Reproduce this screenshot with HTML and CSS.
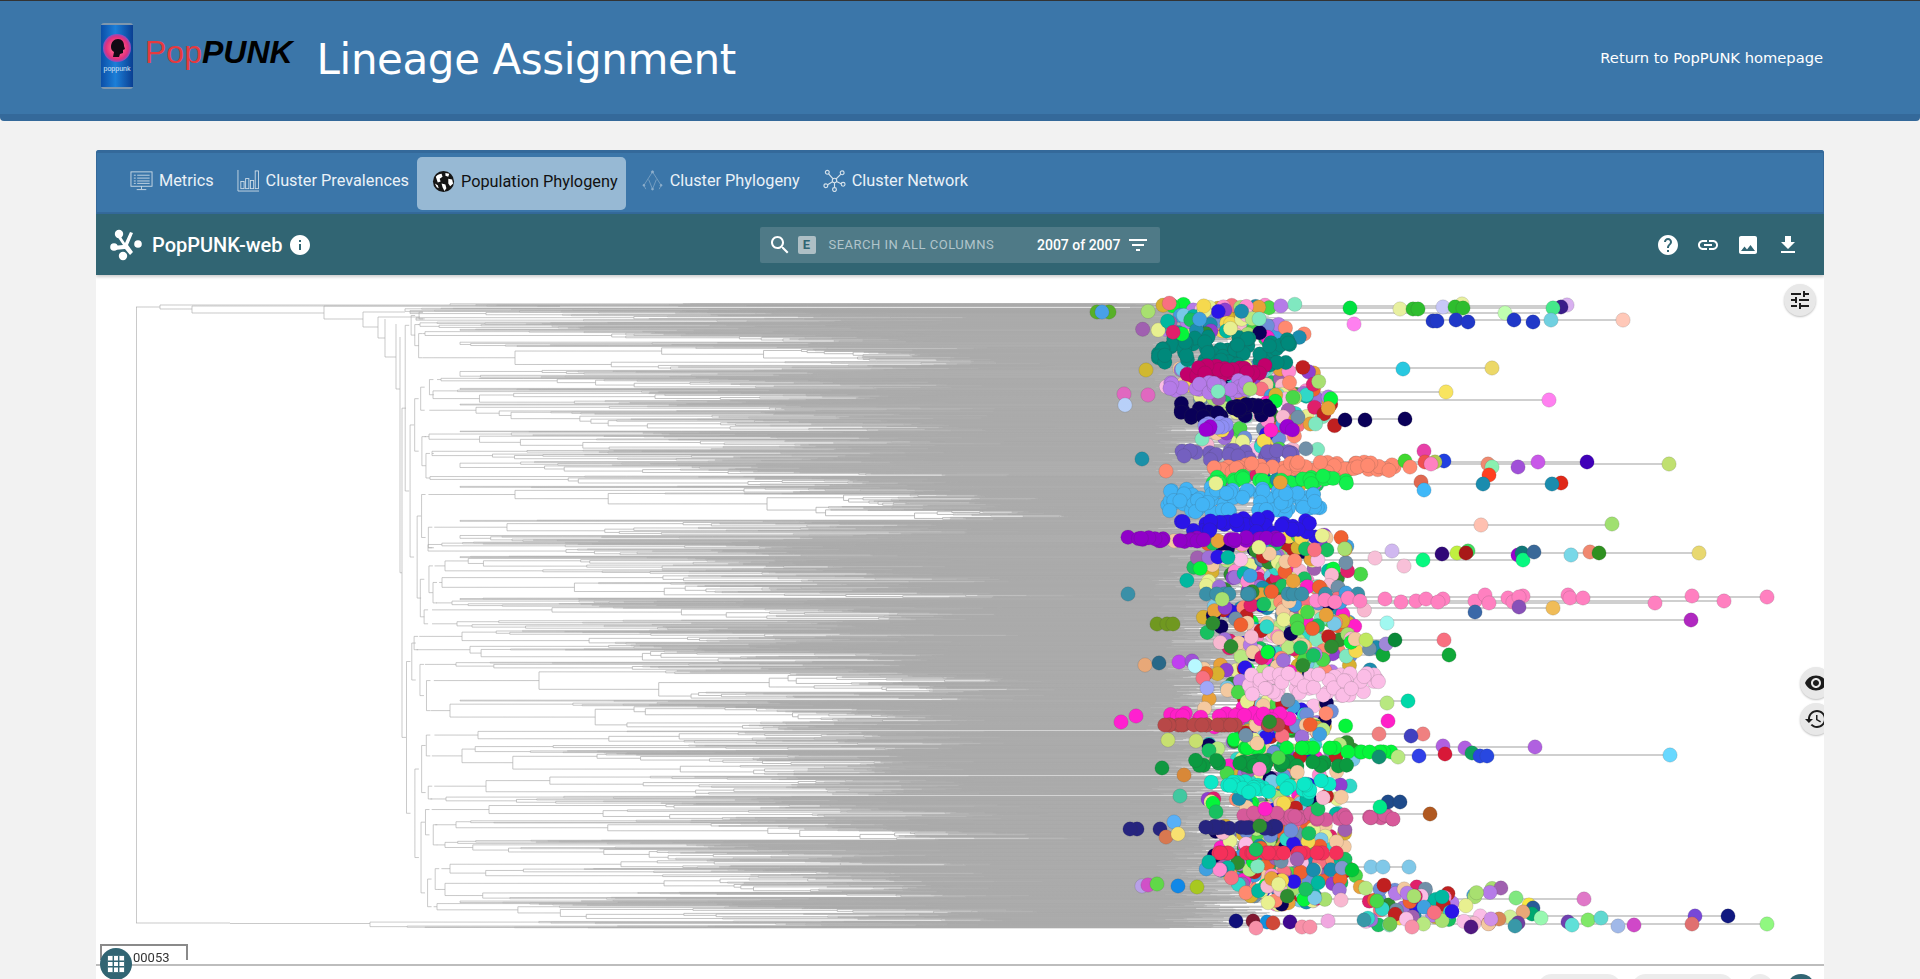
FILE: index.html

```html
<!DOCTYPE html>
<html lang="en">
<head>
  <meta charset="UTF-8">
  <title>PopPUNK - Lineage Assignment</title>
  <link rel="stylesheet" href="styles.css">
</head>
<body>
  <header class="topbar">
    <div class="brand">
      <svg class="can" width="34" height="66" viewBox="0 0 34 66">
        <defs>
          <linearGradient id="canBlue" x1="0" x2="1" y1="0" y2="0">
            <stop offset="0" stop-color="#0b4fa8"/>
            <stop offset="0.45" stop-color="#1c7fd8"/>
            <stop offset="1" stop-color="#0a3f92"/>
          </linearGradient>
          <radialGradient id="canSun">
            <stop offset="0.35" stop-color="#ff5a8a"/>
            <stop offset="0.8" stop-color="#e0307e"/>
            <stop offset="1" stop-color="#8a4fc0"/>
          </radialGradient>
        </defs>
        <rect x="1" y="0" width="32" height="66" rx="3" fill="#7f97ad"/>
        <rect x="1" y="2" width="32" height="62" fill="url(#canBlue)"/>
        <circle cx="17" cy="25" r="14" fill="url(#canSun)"/>
        <path d="M11 24c0-5 3-8 7-8s6 3 6 7l1 3-2 1v3l-3 1-1 3h-6l1-5c-2-1-3-3-3-5z" fill="#120a14"/>
        <text x="17" y="48" class="can-label">poppunk</text>
      </svg>
      <div class="wordmark"><span class="pop">Pop</span><span class="punk">PUNK</span></div>
    </div>
    <h1 class="title">Lineage Assignment</h1>
    <a class="home-link" href="#">Return to PopPUNK homepage</a>
  </header>

  <main class="page">
    <section class="card">
      <nav class="tabs">
        <a class="tab" href="#">
          <svg class="tab-icon" viewBox="0 0 24 24" fill="none" stroke="currentColor" stroke-width="0.9">
            <rect x="1" y="3" width="22" height="15"/><path d="M4 6.5h2M7.5 6.5h13M4 9.5h2M7.5 9.5h13M4 12.5h2M7.5 12.5h13M4 15h2M7.5 15h13M12 18v3M7 21.5h10"/>
          </svg>
          Metrics
        </a>
        <a class="tab" href="#">
          <svg class="tab-icon" viewBox="0 0 24 24" fill="none" stroke="currentColor" stroke-width="0.9">
            <path d="M1 1v22h22"/><rect x="4" y="13" width="3.4" height="7.5"/><rect x="9" y="10" width="3.4" height="10.5"/><rect x="14" y="12" width="3.4" height="8.5"/><rect x="19" y="2" width="3.4" height="18.5"/>
          </svg>
          Cluster Prevalences
        </a>
        <a class="tab tab-active" href="#">
          <svg class="tab-icon" viewBox="0 0 24 24">
            <circle cx="12" cy="12" r="11" fill="#161616"/>
            <path d="M4 7c2-2 4-3 6-3l1 3-3 2 1 3-3 1zM14 3l4 1-1 3-3-1zM17 9l4 1 1 4-3 3-2-3zM10 14l4 1 1 4-2 3-2-4zM3 14l3 2 1 3-2-1z" fill="#fff"/>
          </svg>
          Population Phylogeny
        </a>
        <a class="tab" href="#">
          <svg class="tab-icon tab-icon-faint" viewBox="0 0 24 24" fill="none" stroke="currentColor" stroke-width="0.7">
            <path d="M12 3L3 17M12 3l9 14M8 11l4 10M16 11l-4 10M3 17l2 4M21 17l-2 4"/>
            <circle cx="12" cy="3" r="1.2" fill="currentColor"/><circle cx="3" cy="17" r="1" fill="currentColor"/><circle cx="21" cy="17" r="1" fill="currentColor"/><circle cx="12" cy="21" r="1" fill="currentColor"/>
          </svg>
          Cluster Phylogeny
        </a>
        <a class="tab" href="#">
          <svg class="tab-icon" viewBox="0 0 24 24" fill="none" stroke="currentColor" stroke-width="1.2">
            <path d="M12 12L5 4M12 12l8-8M12 12l-8 5M12 12l8 4M12 12v9"/>
            <circle cx="12" cy="12" r="2.3" fill="#3b76a9"/><circle cx="4.5" cy="3.5" r="2" fill="#3b76a9"/><circle cx="20" cy="4" r="2" fill="#3b76a9"/><circle cx="3" cy="17.5" r="2" fill="#3b76a9"/><circle cx="21" cy="16" r="2" fill="#3b76a9"/><circle cx="12" cy="21.5" r="2" fill="#3b76a9"/>
          </svg>
          Cluster Network
        </a>
      </nav>

      <div class="toolbar">
        <div class="project">
          <svg class="project-logo" viewBox="0 0 32 32" fill="#fff">
            <circle cx="9" cy="5" r="4.2"/><circle cx="28" cy="15" r="3.8"/><circle cx="4" cy="18" r="3.8"/><circle cx="13" cy="27" r="4.2"/>
            <path d="M9 5l6 9 5-11 3 1-5 12 5 7-3 3-5-6-11 1-1-4 10-1-6-9z"/>
          </svg>
          <span class="project-name">PopPUNK-web</span>
          <svg class="icon icon-info" viewBox="0 0 24 24"><path d="M12 2C6.48 2 2 6.48 2 12s4.48 10 10 10 10-4.48 10-10S17.52 2 12 2zm1 15h-2v-6h2v6zm0-8h-2V7h2v2z"/></svg>
        </div>
        <div class="search">
          <svg class="icon" viewBox="0 0 24 24"><path d="M15.5 14h-.79l-.28-.27C15.41 12.59 16 11.11 16 9.5 16 5.91 13.09 3 9.5 3S3 5.91 3 9.5 5.91 16 9.5 16c1.61 0 3.09-.59 4.23-1.57l.27.28v.79l5 4.99L20.49 19l-4.99-5zm-6 0C7.01 14 5 11.99 5 9.5S7.01 5 9.5 5 14 7.01 14 9.5 11.99 14 9.5 14z"/></svg>
          <span class="search-key">E</span>
          <span class="search-hint">SEARCH IN ALL COLUMNS</span>
          <span class="search-count">2007 of 2007</span>
          <svg class="icon" viewBox="0 0 24 24"><path d="M10 18h4v-2h-4v2zM3 6v2h18V6H3zm3 7h12v-2H6v2z"/></svg>
        </div>
        <div class="actions">
          <svg class="icon" viewBox="0 0 24 24"><path d="M12 2C6.48 2 2 6.48 2 12s4.48 10 10 10 10-4.48 10-10S17.52 2 12 2zm1 17h-2v-2h2v2zm2.07-7.75l-.9.92C13.45 12.9 13 13.5 13 15h-2v-.5c0-1.1.45-2.1 1.17-2.83l1.24-1.26c.37-.36.59-.86.59-1.41 0-1.1-.9-2-2-2s-2 .9-2 2H8c0-2.21 1.79-4 4-4s4 1.79 4 4c0 .88-.36 1.68-.93 2.25z"/></svg>
          <svg class="icon" viewBox="0 0 24 24"><path d="M3.9 12c0-1.71 1.39-3.1 3.1-3.1h4V7H7c-2.76 0-5 2.24-5 5s2.24 5 5 5h4v-1.9H7c-1.71 0-3.1-1.39-3.1-3.1zM8 13h8v-2H8v2zm9-6h-4v1.9h4c1.71 0 3.1 1.39 3.1 3.1s-1.39 3.1-3.1 3.1h-4V17h4c2.76 0 5-2.24 5-5s-2.24-5-5-5z"/></svg>
          <svg class="icon" viewBox="0 0 24 24"><path d="M21 19V5c0-1.1-.9-2-2-2H5c-1.1 0-2 .9-2 2v14c0 1.1.9 2 2 2h14c1.1 0 2-.9 2-2zM8.5 13.5l2.5 3.01L14.5 12l4.5 6H5l3.5-4.5z"/></svg>
          <svg class="icon" viewBox="0 0 24 24"><path d="M19 9h-4V3H9v6H5l7 7 7-7zM5 18v2h14v-2H5z"/></svg>
        </div>
      </div>

      <div class="stage">
        <canvas id="tree" width="1728" height="689"></canvas>
        <button class="round round-tune"><svg viewBox="0 0 24 24"><path d="M3 17v2h6v-2H3zM3 5v2h10V5H3zm10 16v-2h8v-2h-8v-2h-2v6h2zM7 9v2H3v2h4v2h2V9H7zm14 4v-2H11v2h10zm-6-4h2V7h4V5h-4V3h-2v6z"/></svg></button>
        <button class="round round-eye"><svg viewBox="0 0 24 24"><path d="M12 4.5C7 4.5 2.73 7.61 1 12c1.73 4.39 6 7.5 11 7.5s9.27-3.11 11-7.5c-1.73-4.39-6-7.5-11-7.5zM12 17c-2.76 0-5-2.24-5-5s2.24-5 5-5 5 2.24 5 5-2.24 5-5 5zm0-8c-1.66 0-3 1.34-3 3s1.34 3 3 3 3-1.34 3-3-1.34-3-3-3z"/></svg></button>
        <button class="round round-history"><svg viewBox="0 0 24 24"><path d="M13 3c-4.97 0-9 4.03-9 9H1l3.89 3.89.07.14L9 12H6c0-3.87 3.13-7 7-7s7 3.13 7 7-3.13 7-7 7c-1.93 0-3.68-.79-4.94-2.06l-1.42 1.42C8.27 19.99 10.51 21 13 21c4.97 0 9-4.03 9-9s-4.03-9-9-9zm-1 5v5l4.28 2.54.72-1.21-3.5-2.08V8H12z"/></svg></button>
      </div>

      <div class="slicer">00053</div>
      <div class="grid-button">
        <svg viewBox="0 0 20 20"><path d="M1 1h18v18H1z" fill="#fff"/><path d="M7 1v18M13 1v18M1 7h18M1 13h18" stroke="#316573" stroke-width="1.6"/></svg>
      </div>

      <div class="footer">
        <span class="pill pill-a"></span>
        <span class="pill pill-b"></span>
        <span class="pill pill-c"></span>
        <span class="pill pill-d"></span>
      </div>
    </section>
  </main>
  <script src="tree.js"></script>
</body>
</html>
```

FILE: styles.css

```css
* {
  box-sizing: border-box;
}
html, body {
  margin: 0;
  height: 979px;
  overflow: hidden;
}
body {
  background: #f2f2f2;
  font-family: Roboto, "Liberation Sans", sans-serif;
}

/* header */
.topbar {
  display: flex;
  align-items: center;
  height: 121px;
  padding: 0 97px 0 100px;
  background: #3b76a9;
  border-top: 1px solid #333;
  border-bottom: 7px solid #34699a;
  border-radius: 0 0 4px 4px;
  color: #fff;
}
.brand {
  display: flex;
  align-items: flex-start;
  gap: 11px;
  height: 66px;
  margin-top: -4px;
}
.can-label {
  font: 7px "Liberation Sans", sans-serif;
  fill: #dbe8f5;
  text-anchor: middle;
}
.wordmark {
  margin-top: 11px;
  font-family: "Liberation Sans", sans-serif;
  font-size: 32px;
  line-height: 36px;
}
.pop {
  color: #e63a3f;
}
.punk {
  color: #000;
  font-weight: bold;
  font-style: italic;
}
.title {
  margin: 4px 0 0 24px;
  font-family: "DejaVu Sans", sans-serif;
  font-size: 42px;
  font-weight: normal;
  letter-spacing: -0.4px;
}
.home-link {
  margin: 0 0 0 auto;
  color: #fff;
  font-family: "DejaVu Sans", sans-serif;
  font-size: 14.7px;
  text-decoration: none;
}

/* card */
.page {
  padding: 29px 96px 0;
}
.card {
  position: relative;
  height: 829px;
  background: #fff;
  overflow: hidden;
  border-radius: 3px 3px 0 0;
}
.tabs {
  display: flex;
  align-items: center;
  height: 64px;
  padding: 3px 0 2px 25px;
  gap: 7px;
  background: #3b76a9;
  border-top: 3px solid #34699a;
  border-bottom: 2px solid #34699a;
  border-left: 1px solid #34699a;
  border-right: 1px solid #34699a;
}
.tab {
  display: flex;
  align-items: center;
  gap: 6px;
  height: 53px;
  padding: 0 8px 5px;
  color: #eaf1f7;
  font-size: 16.3px;
  text-decoration: none;
  white-space: nowrap;
}
.tab-active {
  margin-left: -7px;
  padding: 0 8px 3px 15px;
  background: #97b9d4;
  border-radius: 5px;
  color: #111;
}
.tab-icon {
  width: 23px;
  height: 23px;
  color: #d3e0ea;
}
.tab-icon-faint {
  color: #8fb0cc;
}

/* toolbar */
.toolbar {
  display: grid;
  grid-template-columns: 1fr auto 1fr;
  align-items: center;
  height: 61px;
  padding: 0 15px 0 14px;
  background: #316573;
  box-shadow: 0 2px 3px rgba(0, 0, 0, 0.2);
  color: #fff;
  position: relative;
}
.project {
  display: flex;
  align-items: center;
  gap: 10px;
}
.project-logo {
  width: 32px;
  height: 32px;
}
.project-name {
  font-size: 20px;
  font-weight: 500;
}
.icon {
  width: 24px;
  height: 24px;
  fill: #fff;
  flex: none;
}
.icon-info {
  margin-left: -5px;
}
.search {
  display: flex;
  align-items: center;
  width: 400px;
  height: 36px;
  padding: 0 10px 0 8px;
  background: #4f7a87;
  border-radius: 2px;
}
.search-key {
  width: 18px;
  height: 18px;
  margin-left: 6px;
  background: #aebfc5;
  border-radius: 2px;
  color: #316573;
  font-size: 13px;
  font-weight: 700;
  line-height: 18px;
  text-align: center;
}
.search-hint {
  margin-left: 13px;
  color: #b1c5cb;
  font-size: 13px;
  letter-spacing: 0.5px;
}
.search-count {
  margin: 0 5px 0 auto;
  font-size: 14px;
  font-weight: 500;
}
.actions {
  display: flex;
  justify-content: flex-end;
  gap: 16px;
  padding-right: 9px;
}

/* tree area */
.stage {
  position: relative;
  height: 691px;
  border-bottom: 2px solid #bdbdbd;
  overflow: hidden;
}
#tree {
  display: block;
}
.round {
  position: absolute;
  width: 32px;
  height: 32px;
  padding: 4px;
  border: 0;
  border-radius: 50%;
  background: #e8e8e8;
  box-shadow: 0 1px 2px rgba(0, 0, 0, 0.25);
}
.round svg {
  display: block;
  width: 24px;
  height: 24px;
  fill: #1c1c1c;
}
.round-tune {
  top: 9px;
  left: 1688px;
}
.round-eye {
  top: 392px;
  left: 1704px;
}
.round-history {
  top: 428px;
  left: 1704px;
}

/* bottom strip */
.slicer {
  position: absolute;
  top: 794px;
  left: 4px;
  width: 88px;
  height: 16px;
  padding: 4px 0 0 31px;
  border: 2px solid #8a8a8a;
  border-bottom: 0;
  color: #333;
  font-size: 13px;
  line-height: 16px;
}
.grid-button {
  position: absolute;
  top: 798px;
  left: 4px;
  width: 32px;
  height: 32px;
  padding: 7px;
  background: #316573;
  border-radius: 50%;
}
.grid-button svg {
  display: block;
}
.footer {
  display: flex;
  justify-content: flex-end;
  align-items: flex-start;
  padding: 8px 9px 0 0;
  gap: 9px;
}
.pill {
  height: 30px;
  background: #ececec;
  border-radius: 15px;
}
.pill-a {
  width: 85px;
}
.pill-b {
  width: 104px;
}
.pill-c {
  width: 26px;
  margin: 0 5px 0 3px;
}
.pill-d {
  width: 28px;
  background: #316573;
}
```

FILE: tree.js

```js
// phylogeny drawing. coordinates are page pixels, canvas sits at 96,275
const canvas = document.getElementById("tree");
const ctx = canvas.getContext("2d");
ctx.translate(-96, -275);

let seed = 20070053;
function rnd() {
  seed = (seed + 0x6d2b79f5) | 0;
  let t = Math.imul(seed ^ (seed >>> 15), 1 | seed);
  t = (t + Math.imul(t ^ (t >>> 7), 61 | t)) ^ t;
  return ((t ^ (t >>> 14)) >>> 0) / 4294967296;
}
function between(a, b) {
  return a + rnd() * (b - a);
}
// leaves thin out towards both ends of a band
function middling(a, b) {
  return a + ((rnd() + rnd()) / 2) * (b - a);
}

// lines get a little stronger to the right
const lineFade = ctx.createLinearGradient(420, 0, 950, 0);
lineFade.addColorStop(0, "rgba(168,168,168,0.72)");
lineFade.addColorStop(1, "rgba(168,168,168,0.9)");
ctx.lineWidth = 0.85;
ctx.strokeStyle = lineFade;

function hline(x1, x2, y) {
  ctx.beginPath();
  ctx.moveTo(x1, y);
  ctx.lineTo(x2, y);
  ctx.stroke();
}
function vline(x, y1, y2) {
  ctx.beginPath();
  ctx.moveTo(x, y1);
  ctx.lineTo(x, y2);
  ctx.stroke();
}

// a small spread holds splits near the tips, which leaves the left side white
let spread = 450;
function nextX(x, n, end) {
  const floor = end - (60 + spread * Math.log2(n + 1)) * between(0.35, 1.3);
  const step = x + (end - x) * (Math.pow(rnd(), 2) * 0.3 + 0.015);
  return Math.max(step, Math.min(floor, end - 10));
}

// random subtree inside a y range, returns the y of its root
function grow(x, y0, y1, n, end) {
  if (n <= 1) {
    const y = (y0 + y1) / 2;
    hline(x, end + between(-15, 110), y);
    return y;
  }
  const skew = rnd() < 0.45;
  const ratio = skew ? between(0.05, 0.28) : between(0.3, 0.7);
  let k = Math.max(1, Math.round(n * ratio));
  if (k >= n) k = n - 1;
  const yMid = y0 + (y1 - y0) * (k / n);
  const xa = nextX(x, k, end);
  const xb = nextX(x, n - k, end);
  const ya = grow(xa, y0, yMid, k, end);
  const yb = grow(xb, yMid, y1, n - k, end);
  hline(x, xa, ya);
  hline(x, xb, yb);
  vline(x, ya, yb);
  return (ya + yb) / 2;
}

// x of first split, y range
const clades = [
  [410, 310, 316], [416, 316, 322], [420, 322, 329], [425, 331, 342],
  [515, 347, 370], [441, 378, 388], [433, 390, 404], [476, 406, 431],
  [429, 432, 450], [432, 450, 461], [430, 476, 486], [515, 488, 520],
  [507, 522, 535], [428, 542, 556], [445, 558, 575], [442, 575, 598],
  [452, 600, 607], [552, 607, 620], [457, 620, 630], [462, 630, 645],
  [470, 645, 662], [456, 662, 670], [539, 670, 700], [450, 702, 730],
  [478, 731, 745], [462, 745, 775], [486, 776, 795], [446, 796, 804],
  [489, 804, 820], [456, 820, 840], [445, 840, 860], [450, 860, 878],
  [445, 878, 900], [437, 903, 921]
];

function spine(list, x) {
  if (list.length === 1) {
    const c = list[0];
    const n = Math.round((c[2] - c[1]) / 0.31);
    spread = c[0] > 470 ? 230 : between(380, 560);
    const y = grow(c[0], c[1], c[2], n, between(1160, 1185));
    hline(x, c[0], y);
    return y;
  }
  const cut = Math.max(1, Math.round(list.length * between(0.25, 0.6)));
  const ya = spine(list.slice(0, cut), x + between(2, 9));
  const yb = spine(list.slice(cut), x + between(2, 9));
  hline(x, x + 4, ya);
  hline(x, x + 4, yb);
  vline(x, ya, yb);
  return (ya + yb) / 2;
}

// gaps that the clades leave open are still full of leaves further right
[[329, 331], [342, 347], [370, 378], [388, 390], [404, 406], [431, 432], [461, 476], [486, 488], [520, 522], [535, 542], [556, 558], [598, 600], [700, 702], [900, 903]].forEach(g => {
  grow(460, g[0], g[1], Math.round((g[1] - g[0]) / 0.4), 1165);
});

// backbone down from the root, drawn by hand
vline(136.5, 307, 923);
hline(136, 160, 307);
vline(160, 305, 309);
hline(160, 450, 305);
grow(450, 303.5, 306.5, 12, 1130);
hline(160, 192, 309);
vline(192, 306, 313);
hline(192, 560, 306);
hline(192, 324, 313);
vline(324, 306, 319);
hline(324, 560, 306);
hline(324, 363, 319);
vline(363, 312, 327);
hline(363, 405, 312);
grow(405, 308, 313, 20, 1130);
hline(363, 378, 327);
vline(378, 317, 338);
hline(378, 420, 317);
hline(378, 385, 338);
vline(385, 319, 357);
hline(385, 396, 357);
vline(396, 324, 389);
hline(396, 400, 389);
const spineY = spine(clades, 402);
vline(400, 337, spineY);
hline(400, 402, spineY);

hline(136, 230, 923);
hline(230, 370, 923.5);
spread = 450;
grow(370, 921, 928, 24, 1170);

// long tips of the outlying leaves
ctx.lineWidth = 1.3;
ctx.strokeStyle = "rgba(170,170,170,0.75)";
[
  [1570, 306], [1560, 308], [1630, 320], [1540, 313], [1495, 368], [1450, 392], [1550, 400],
  [1410, 419], [1672, 464], [1590, 462], [1560, 484], [1615, 525], [1700, 553], [1525, 560],
  [1770, 597], [1725, 601], [1656, 603], [1555, 608], [1692, 620], [1445, 640], [1450, 655],
  [1425, 734], [1408, 701], [1670, 755], [1535, 747], [1430, 814], [1400, 802], [1410, 867],
  [1584, 899], [1730, 916], [1768, 924]
].forEach(t => hline(1130, t[0], t[1]));

// leaves
function dot(x, y, color) {
  ctx.beginPath();
  ctx.arc(x, y, 7.2, 0, Math.PI * 2);
  ctx.fillStyle = color;
  ctx.fill();
  ctx.lineWidth = 0.7;
  ctx.strokeStyle = "rgba(60,60,60,0.22)";
  ctx.stroke();
}

const palette = [
  "#e8a13a", "#f5d94e", "#e01f6b", "#ff1fc8", "#8f3fd0", "#3fa0e0", "#18c060", "#05f53a",
  "#f4c9a0", "#b57be8", "#2a14e8", "#1a8cae", "#ff8a70", "#a8e070", "#0a0058", "#c02020",
  "#80e8c0", "#6f8fd8", "#d8b030", "#ff8ad0", "#00b8a0", "#f06030", "#9f70d8", "#48d848",
  "#e8f090", "#a060b0", "#2e8c30", "#78c8e8", "#f87080", "#30d8c8", "#7090a8", "#fbbde6",
  "#f4c9a0", "#e8f090", "#f8b8d0", "#b8e880"
];

const mixed = [
  [303, 335, 1140, 1310, 100], [330, 345, 1140, 1300, 15], [365, 400, 1155, 1330, 75],
  [395, 450, 1195, 1355, 70], [475, 485, 1205, 1360, 30], [535, 590, 1170, 1385, 130],
  [585, 600, 1200, 1360, 30], [600, 672, 1190, 1380, 180], [672, 700, 1195, 1260, 12],
  [700, 730, 1190, 1350, 50], [725, 760, 1200, 1365, 70], [765, 790, 1200, 1365, 35],
  [795, 815, 1200, 1355, 55], [825, 850, 1200, 1355, 70], [855, 885, 1185, 1365, 95],
  [880, 905, 1235, 1350, 40], [885, 925, 1330, 1510, 70]
];
mixed.forEach(m => {
  for (let i = 0; i < m[4]; i++) {
    dot(middling(m[2], m[3]), between(m[0], m[1]), palette[Math.floor(rnd() * palette.length)]);
  }
});

// clusters of one colour: y0, y1, x0, x1, count, colour
const blobs = [
  [337, 365, 1157, 1290, 60, "#00897b"], [365, 377, 1187, 1267, 25, "#c2006b"],
  [380, 393, 1170, 1253, 25, "#b57be8"], [403, 418, 1180, 1270, 30, "#0a0058"],
  [422, 428, 1203, 1230, 6, "#8f8ff5"], [426, 430, 1205, 1300, 6, "#9b00d3"],
  [450, 460, 1180, 1297, 25, "#7460c0"], [462, 473, 1213, 1397, 50, "#ff8a70"],
  [476, 484, 1213, 1347, 25, "#12f04c"], [487, 513, 1167, 1320, 90, "#42b4f5"],
  [517, 533, 1180, 1313, 40, "#2a14e8"], [537, 542, 1125, 1300, 30, "#9000c8"],
  [594, 594, 1200, 1360, 14, "#3a90a8"], [673, 697, 1247, 1380, 50, "#fbbde6"],
  [713, 720, 1170, 1290, 20, "#ff1fc8"], [725, 725, 1163, 1287, 20, "#b84848"],
  [748, 748, 1240, 1340, 12, "#05f53a"], [752, 752, 1347, 1400, 8, "#05f53a"],
  [760, 767, 1193, 1347, 30, "#0b9a40"], [780, 793, 1207, 1337, 30, "#0ce8c8"],
  [813, 820, 1240, 1400, 30, "#d65a9a"], [826, 829, 1205, 1287, 14, "#26247f"],
  [853, 853, 1217, 1337, 24, "#f5305a"]
];
blobs.forEach(b => {
  for (let i = 0; i < b[4]; i++) {
    dot(between(b[2], b[3]), between(b[0], b[1]), b[5]);
  }
});

// a few mixed leaves sit on top of the clusters
mixed.forEach(m => {
  for (let i = 0; i < m[4] / 20; i++) {
    dot(middling(m[2], m[3]), between(m[0], m[1]), palette[Math.floor(rnd() * palette.length)]);
  }
});

// leaves that stand alone, read off one by one
const single = [
  [1097, 312, "#58b028"], [1109, 312, "#58b028"], [1102, 312, "#48a0e8"], [1146, 370, "#d0b830"],
  [1124, 394, "#e068c0"], [1148, 395, "#e068c0"], [1125, 405, "#b8d0f8"], [1142, 459, "#1a90a8"],
  [1166, 471, "#ff8a70"], [1128, 594, "#3a90a8"], [1157, 624, "#709820"], [1167, 624, "#709820"],
  [1173, 624, "#709820"], [1145, 665, "#e8a878"], [1159, 663, "#286888"], [1179, 662, "#c040f0"],
  [1192, 661, "#a050d8"], [1195, 666, "#b8f8ff"], [1207, 688, "#a0a8f8"], [1121, 722, "#ff20d0"],
  [1136, 716, "#ff20d0"], [1168, 740, "#c8e070"], [1196, 741, "#c8e070"], [1162, 768, "#109840"],
  [1184, 775, "#d88838"], [1180, 796, "#40c8a0"], [1137, 829, "#26247f"], [1130, 829, "#26247f"],
  [1160, 829, "#26247f"], [1174, 822, "#58b0f8"], [1166, 837, "#d87850"], [1178, 834, "#f8e070"],
  [1142, 886, "#b8a0e8"], [1148, 885, "#d050c8"], [1157, 884, "#60d848"], [1178, 886, "#1088e8"],
  [1197, 887, "#a8c820"],
  [1350, 308, "#00e040"], [1400, 309, "#e8f0a0"], [1413, 309, "#2ebd2e"], [1418, 309, "#2ebd2e"],
  [1443, 307, "#c8c8f8"], [1462, 304, "#e8f0a0"], [1455, 307, "#2ebd2e"], [1463, 308, "#2ebd2e"],
  [1505, 313, "#c0ffb0"], [1567, 305, "#d8b0f0"], [1561, 307, "#3a1c8a"], [1553, 308, "#45e88a"],
  [1433, 321, "#2038c8"], [1437, 321, "#2038c8"], [1456, 320, "#2038c8"], [1468, 322, "#2038c8"],
  [1514, 320, "#2038c8"], [1533, 322, "#2038c8"], [1551, 320, "#70d0e0"], [1623, 320, "#ffc8b8"],
  [1354, 324, "#ff80f0"], [1403, 369, "#28c8e0"], [1492, 368, "#ecd868"], [1446, 392, "#f8e460"],
  [1549, 400, "#ff80f0"], [1345, 420, "#0a0058"], [1365, 420, "#0a0058"], [1405, 419, "#0a0058"],
  [1424, 451, "#e840a8"], [1405, 461, "#40d830"], [1410, 467, "#ff8a70"], [1425, 462, "#f05050"],
  [1444, 461, "#2040e0"], [1435, 462, "#b0c850"], [1431, 464, "#ff80c0"], [1488, 464, "#f08a70"],
  [1492, 467, "#8af0b0"], [1489, 475, "#ff4020"], [1518, 467, "#a050d8"], [1538, 462, "#c858e8"],
  [1587, 462, "#4000b8"], [1669, 464, "#c0e070"], [1421, 482, "#e06850"], [1424, 490, "#40b8f8"],
  [1483, 484, "#1a8cae"], [1561, 483, "#e02818"], [1552, 484, "#1a8cae"], [1481, 525, "#ffc0b0"],
  [1612, 524, "#a0e070"], [1423, 560, "#08f880"], [1442, 554, "#300878"], [1457, 553, "#c0f040"],
  [1468, 551, "#40e060"], [1466, 553, "#a81818"], [1518, 555, "#9800d0"], [1522, 553, "#107878"],
  [1523, 560, "#08f880"], [1534, 552, "#3a6898"], [1571, 555, "#78d8e8"], [1590, 552, "#f08870"],
  [1599, 553, "#2e9020"], [1699, 553, "#e8d870"], [1375, 558, "#f8c0d8"], [1392, 551, "#d0b8f0"],
  [1404, 566, "#f8c0d8"]
];
[1401, 1416, 1426, 1443, 1438, 1475, 1485, 1489, 1508, 1513, 1523, 1519, 1568, 1570, 1583, 1655, 1692, 1724, 1767,
 1325, 1335, 1348, 1360, 1385].forEach((x, i) => {
  const ys = [602, 601, 599, 599, 602, 601, 595, 603, 598, 602, 596, 597, 595, 598, 598, 603, 596, 601, 597, 600, 602, 598, 601, 599];
  single.push([x, ys[i], "#ff80c0"]);
});
single.push(
  [1475, 612, "#3a68a8"], [1519, 607, "#8850b8"], [1553, 608, "#f0bc58"], [1691, 620, "#b028c0"],
  [1444, 640, "#f87080"], [1449, 655, "#10a838"], [1387, 623, "#a0f8f0"], [1366, 640, "#c0e860"],
  [1383, 655, "#10a838"], [1386, 644, "#a088d8"], [1395, 640, "#0a8838"], [1387, 703, "#b8e880"],
  [1408, 701, "#00d8a8"], [1388, 721, "#ff20c8"], [1379, 734, "#f08080"], [1423, 734, "#f08080"],
  [1411, 736, "#4040c0"], [1535, 747, "#b060e0"], [1443, 746, "#b060e0"], [1465, 748, "#b060e0"],
  [1472, 753, "#10a060"], [1445, 754, "#d81838"], [1398, 757, "#b8e880"], [1379, 757, "#109070"],
  [1419, 756, "#3040e8"], [1480, 756, "#2848e0"], [1487, 756, "#2848e0"], [1670, 755, "#68d8ff"],
  [1430, 814, "#b05820"], [1393, 819, "#d85a9a"], [1388, 802, "#1e4a8a"], [1400, 802, "#1e4a8a"],
  [1380, 807, "#00e888"], [1342, 868, "#8098d0"], [1352, 870, "#00c838"], [1371, 867, "#80c8e8"],
  [1383, 867, "#80c8e8"], [1409, 867, "#80c8e8"], [1584, 899, "#e078c8"], [1516, 898, "#80e880"],
  [1529, 905, "#f8e840"], [1533, 908, "#2a5c98"], [1532, 914, "#00a870"], [1523, 912, "#e8a878"],
  [1541, 918, "#98f8b0"], [1510, 917, "#d0f098"], [1518, 923, "#7040a0"], [1515, 926, "#3898a8"],
  [1499, 919, "#d88858"], [1491, 919, "#d090e8"], [1568, 922, "#7040b0"], [1572, 925, "#60e0d8"],
  [1588, 920, "#80e868"], [1601, 918, "#60d8d0"], [1618, 926, "#a0b8e8"], [1634, 925, "#d048c8"],
  [1695, 916, "#7848d8"], [1728, 916, "#101880"], [1692, 924, "#e07070"], [1767, 924, "#90f880"],
  [1236, 921, "#10107a"], [1253, 921, "#801830"], [1267, 922, "#1090e0"], [1273, 923, "#d04838"],
  [1290, 922, "#400890"], [1256, 928, "#f890a8"], [1302, 927, "#f890a8"], [1310, 927, "#f890a8"],
  [1328, 921, "#f0a8e0"], [1364, 920, "#3898a8"], [1390, 924, "#70c850"], [1412, 927, "#f890a8"],
  [1471, 927, "#501880"]
);
single.forEach(s => dot(s[0], s[1], s[2]));
```
